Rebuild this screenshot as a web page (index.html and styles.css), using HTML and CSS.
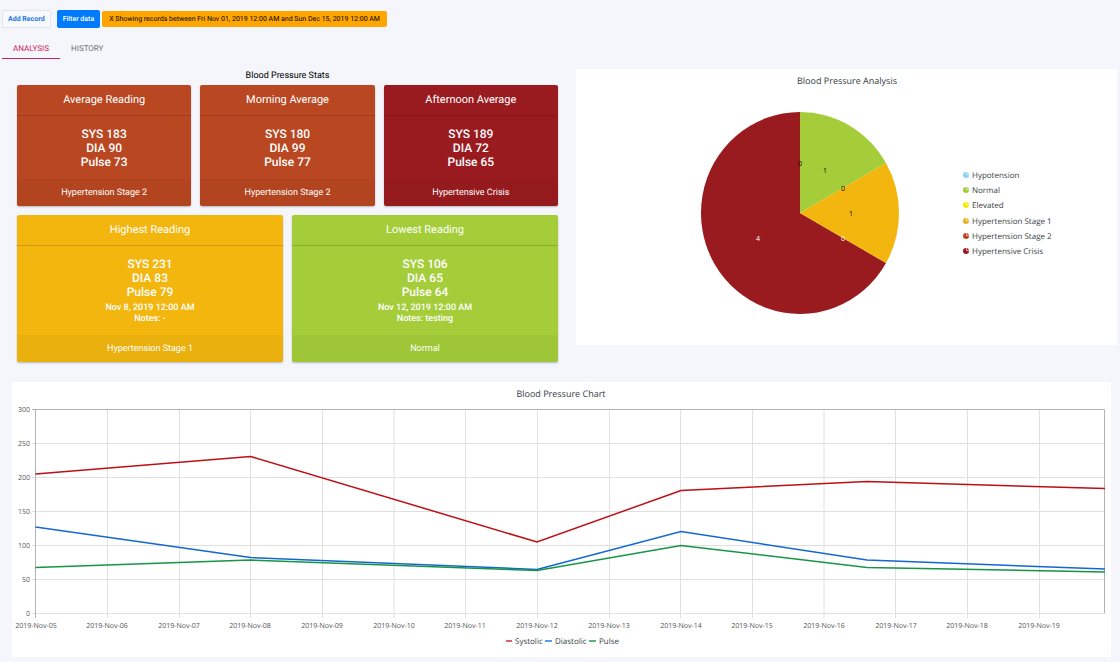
FILE: index.html
```html
<!DOCTYPE html>
<html lang="en">
<head>
<meta charset="utf-8">
<meta name="viewport" content="width=device-width, initial-scale=1">
<title>Blood Pressure</title>
<link rel="stylesheet" href="styles.css">
</head>
<body>
<header class="toolbar">
  <button class="btn btn-light" type="button">Add Record</button>
  <button class="btn btn-primary" type="button">Filter data</button>
  <button class="chip" type="button">X Showing records between Fri Nov 01, 2019 12:00 AM and Sun Dec 15, 2019 12:00 AM</button>
</header>
<nav class="tabs" role="tablist">
  <button class="tab active" type="button" role="tab" aria-selected="true">Analysis</button>
  <button class="tab" type="button" role="tab" aria-selected="false">History</button>
</nav>
<main>
  <div class="overview">
    <section class="stats">
      <h2 class="stats-title">Blood Pressure Stats</h2>
      <div class="cards">
        <article class="card stage2">
          <h3 class="card-head">Average Reading</h3>
          <div class="card-body"><p>SYS 183</p><p>DIA 90</p><p>Pulse 73</p></div>
          <div class="card-foot">Hypertension Stage 2</div>
        </article>
        <article class="card stage2">
          <h3 class="card-head">Morning Average</h3>
          <div class="card-body"><p>SYS 180</p><p>DIA 99</p><p>Pulse 77</p></div>
          <div class="card-foot">Hypertension Stage 2</div>
        </article>
        <article class="card crisis">
          <h3 class="card-head">Afternoon Average</h3>
          <div class="card-body"><p>SYS 189</p><p>DIA 72</p><p>Pulse 65</p></div>
          <div class="card-foot">Hypertensive Crisis</div>
        </article>
      </div>
      <div class="cards">
        <article class="card stage1">
          <h3 class="card-head">Highest Reading</h3>
          <div class="card-body"><p>SYS 231</p><p>DIA 83</p><p>Pulse 79</p>
            <div class="details"><p>Nov 8, 2019 12:00 AM</p><p>Notes: -</p></div></div>
          <div class="card-foot">Hypertension Stage 1</div>
        </article>
        <article class="card normal">
          <h3 class="card-head">Lowest Reading</h3>
          <div class="card-body"><p>SYS 106</p><p>DIA 65</p><p>Pulse 64</p>
            <div class="details"><p>Nov 12, 2019 12:00 AM</p><p>Notes: testing</p></div></div>
          <div class="card-foot">Normal</div>
        </article>
      </div>
    </section>
    <section class="panel">
      <svg class="chart" viewBox="0 0 541 276" role="img" aria-label="Blood Pressure Analysis">
        <defs>
          <g id="pie-mark"><circle r="3"/><path d="M0.5 -3.5V-0.5H3.5" fill="none" stroke="#fff" stroke-width="0.6"/></g>
        </defs>
        <text class="chart-title" x="271" y="15">Blood Pressure Analysis</text>
        <path fill="#991b1f" d="M224 144V43A99 101 0 1 0 310 194Z"/>
        <path fill="#a4cd39" d="M224 144V43A99 101 0 0 1 310 94Z"/>
        <path fill="#f2b60f" d="M224 144L310 94A99 101 0 0 1 310 194Z"/>
        <g class="slice-label">
          <text x="224" y="97">0</text><text x="249" y="104">1</text><text x="267" y="122">0</text><text x="275" y="147">1</text>
          <text class="on-dark" x="267" y="172">0</text><text class="on-dark" x="182" y="172">4</text>
        </g>
        <g class="legend">
          <use href="#pie-mark" x="390" y="106" fill="#87d3f2"/><text x="396" y="109">Hypotension</text>
          <use href="#pie-mark" x="390" y="121" fill="#a4cd39"/><text x="396" y="124">Normal</text>
          <use href="#pie-mark" x="390" y="136" fill="#f7ea00"/><text x="396" y="139">Elevated</text>
          <use href="#pie-mark" x="390" y="152" fill="#e9b021"/><text x="396" y="155">Hypertension Stage 1</text>
          <use href="#pie-mark" x="390" y="167" fill="#b94722"/><text x="396" y="170">Hypertension Stage 2</text>
          <use href="#pie-mark" x="390" y="182" fill="#991b1f"/><text x="396" y="185">Hypertensive Crisis</text>
        </g>
      </svg>
    </section>
  </div>
  <section class="panel trend">
    <svg class="chart" viewBox="0 0 1099 275" role="img" aria-label="Blood Pressure Chart">
      <text class="chart-title" x="549" y="15">Blood Pressure Chart</text>
      <path class="grid" d="M20 61.500H1093M20 95.500H1093M20 129.500H1093M20 163.500H1093M20 197.500H1093"/>
      <path class="grid" d="M95.500 27V236M167.500 27V236M238.500 27V236M310.500 27V236M382 27V236M453.500 27V236M525.500 27V236M597.500 27V236M668.500 27V236M740.500 27V236M812 27V236M883.500 27V236M955.500 27V236M1027.500 27V236"/>
      <path class="grid" d="M20 231.500H1093"/>
      <path class="axis" d="M20 27.500H1092.500V231M23.500 27V236"/>
      <g class="tick y-tick">
        <text x="18" y="30">300</text><text x="18" y="64">250</text><text x="18" y="98">200</text><text x="18" y="132">150</text><text x="18" y="166">100</text><text x="18" y="200">50</text><text x="18" y="234">0</text>
      </g>
      <g class="tick x-tick">
        <text x="24" y="246">2019-Nov-05</text><text x="95" y="246">2019-Nov-06</text><text x="167" y="246">2019-Nov-07</text><text x="238" y="246">2019-Nov-08</text><text x="310" y="246">2019-Nov-09</text><text x="382" y="246">2019-Nov-10</text><text x="453" y="246">2019-Nov-11</text><text x="525" y="246">2019-Nov-12</text><text x="597" y="246">2019-Nov-13</text><text x="669" y="246">2019-Nov-14</text><text x="740" y="246">2019-Nov-15</text><text x="812" y="246">2019-Nov-16</text><text x="884" y="246">2019-Nov-17</text><text x="955" y="246">2019-Nov-18</text><text x="1027" y="246">2019-Nov-19</text>
      </g>
      <polyline class="series" stroke="#bd0f14" points="23.5,92 238.5,74.500 525,160 669,108.500 855,99.500 1093,106.500"/>
      <polyline class="series" stroke="#1467d2" points="23.5,145 238.5,175.500 525,187.500 669,149.500 855,178 1093,187"/>
      <polyline class="series" stroke="#169544" points="23.5,185.500 238.5,178 525,188.500 669,163.500 855,185.500 1093,190"/>
      <g class="legend">
        <path stroke="#d4636a" stroke-width="2" d="M494 259H500"/><text x="503" y="262">Systolic</text>
        <path stroke="#5b9bee" stroke-width="2" d="M533 259H540"/><text x="543" y="262">Diastolic</text>
        <path stroke="#5bb57c" stroke-width="2" d="M577 259H584"/><text x="587" y="262">Pulse</text>
      </g>
    </svg>
  </section>
</main>
</body>
</html>
```
FILE: styles.css
```css
* { box-sizing: border-box; }
body {
  margin: 0;
  background: #f4f6fb;
  color: #000;
  font-family: Roboto, "Liberation Sans", sans-serif;
  text-rendering: geometricPrecision;
}
h2, h3, p { margin: 0; font-weight: 400; }
button { font-family: inherit; text-rendering: inherit; cursor: pointer; }

.toolbar {
  display: flex;
  align-items: center;
  padding: 10px 2px 0;
}
.btn {
  height: 18px;
  padding: 0 5px;
  border: 1px solid;
  border-radius: 2px;
  font-size: 7px;
  font-weight: 700;
}
.btn-light { margin-right: 6px; background: #f8f9fa; border-color: #dce7f3; color: #1976e8; }
.btn-primary { margin-right: 2px; background: #007bff; border-color: #007bff; color: #fff; font-weight: 500; }
.chip {
  height: 16px;
  padding: 0 7px;
  border: 0;
  border-radius: 2px;
  background: #ffa500;
  color: #000;
  font-size: 7px;
}

.tabs { display: flex; padding: 11px 2px 0; }
.tab {
  height: 20px;
  padding: 0 11px;
  border: 0;
  border-bottom: 1px solid transparent;
  background: none;
  color: #6f7277;
  font-size: 8px;
  font-weight: 400;
  text-transform: uppercase;
}
.tab.active { border-bottom-color: #c2255c; color: #d0215c; }

.overview {
  display: grid;
  grid-template-columns: 1fr 1fr;
  gap: 18px;
  align-items: start;
  padding: 10px 3px 0 17px;
}
.stats-title { padding-top: 1px; height: 16px; font-size: 9px; line-height: 12px; text-align: center; }
.cards {
  display: grid;
  grid-auto-flow: column;
  grid-auto-columns: 1fr;
  gap: 9px;
  margin-bottom: 9px;
}
.card {
  border-radius: 2px;
  box-shadow: 0 1px 2px rgba(0, 0, 0, 0.25);
  color: #fff;
  text-align: center;
  overflow: hidden;
}
.stage2 { background: #b94722; }
.crisis { background: #991b1f; }
.stage1 { background: #f2b60f; }
.normal { background: #a4cd39; }
.card-head {
  padding: 8px 4px;
  border-bottom: 1px solid rgba(0, 0, 0, 0.15);
  font-size: 11px;
  line-height: 14px;
}
.card-body {
  padding: 11px 4px 10px;
  font-size: 12px;
  line-height: 14px;
}
.card-body p { font-weight: 500; }
.details { padding: 4px 0 0; font-size: 9px; line-height: 11px; }
.card-foot {
  padding: 8px 4px 6px;
  background: rgba(0, 0, 0, 0.03);
  font-size: 9px;
  line-height: 13px;
}

.panel { background: #fff; }
.trend { margin: 11px 9px 5px 12px; }
.chart { display: block; width: 100%; height: auto; font-family: "Open Sans", "Noto Sans", sans-serif; }
.chart-title { fill: #373d3f; font-size: 9px; text-anchor: middle; }
.slice-label { font-size: 7px; text-anchor: middle; }
.slice-label .on-dark { fill: #fff; }
.legend { fill: #373d3f; font-size: 8px; }
.grid { fill: none; stroke: #e0e0e0; }
.axis { fill: none; stroke: #b3b3b3; }
.tick { fill: #555; font-size: 7px; }
.y-tick { text-anchor: end; }
.x-tick { text-anchor: middle; }
.series { fill: none; stroke-width: 1.5; }
```
